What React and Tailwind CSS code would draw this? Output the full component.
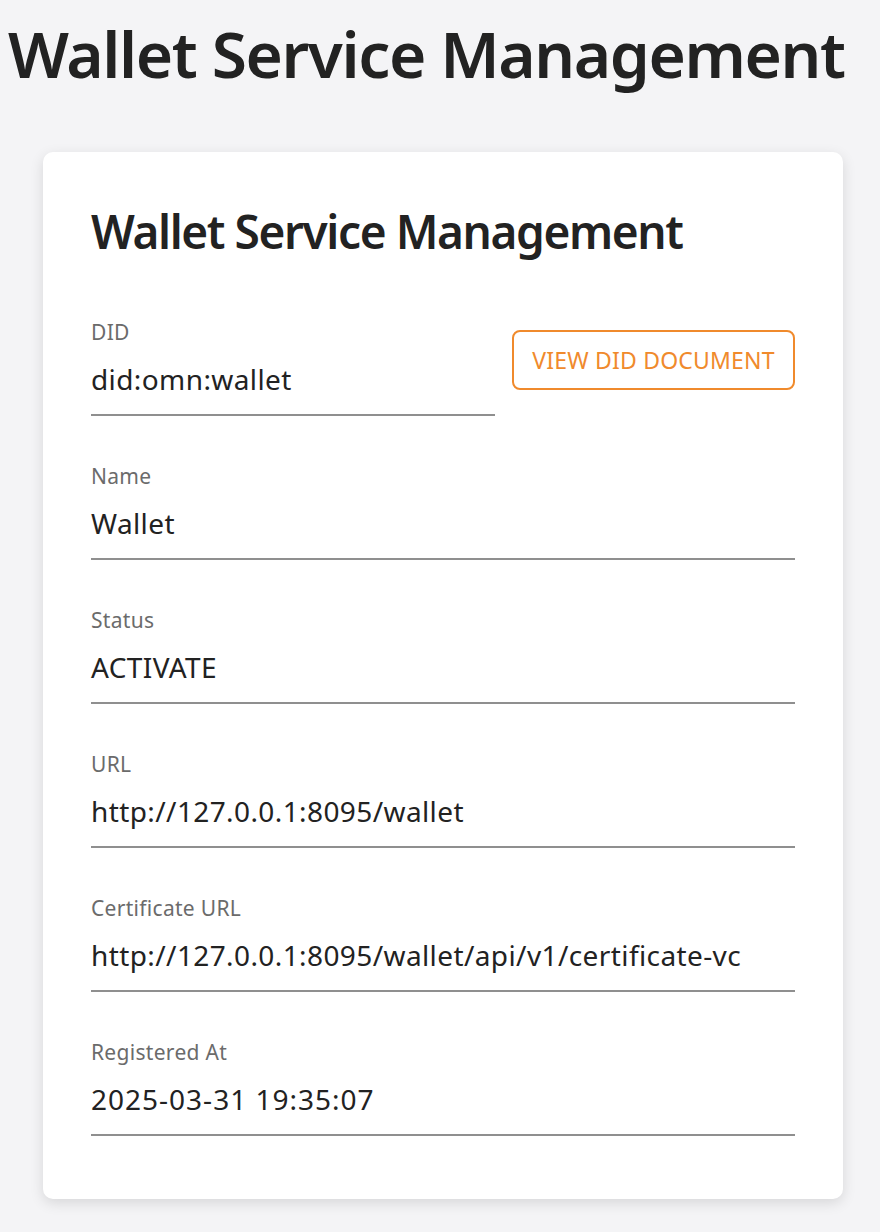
const fields = [
  { label: 'Name', value: 'Wallet' },
  { label: 'Status', value: 'ACTIVATE' },
  { label: 'URL', value: 'http://127.0.0.1:8095/wallet' },
  { label: 'Certificate URL', value: 'http://127.0.0.1:8095/wallet/api/v1/certificate-vc' },
  { label: 'Registered At', value: '2025-03-31 19:35:07', wide: true },
];

function Field({ label, value, wide, className = '' }) {
  return (
    <div className={`flex flex-col border-b-2 border-[#8f8f8f] ${className}`}>
      <span className="text-[21px] leading-[30px] tracking-[0.3px] text-[#6b6b6b]">{label}</span>
      <span
        className={`mt-[14px] pb-[17px] text-[28px] leading-[36px] text-[#222222] ${
          wide ? 'tracking-[1px]' : 'tracking-[0.4px]'
        }`}
      >
        {value}
      </span>
    </div>
  );
}

export default function App() {
  return (
    <div
      className="min-h-[1232px] bg-[#f4f4f6] pt-[10px]"
      style={{ fontFamily: '"Noto Sans", sans-serif' }}
    >
      <h1 className="ml-[8px] text-[64px] font-semibold leading-[88px] tracking-[-1.4px] text-[#222222]">
        Wallet Service Management
      </h1>
      <div className="ml-[43px] mt-[54px] w-[800px] rounded-[10px] bg-white px-[48px] pb-[63px] pt-[49px] shadow-[0_4px_14px_rgba(0,0,0,0.12)]">
        <h2 className="text-[46px] font-semibold leading-[60px] tracking-[-1.4px] text-[#222222]">
          Wallet Service Management
        </h2>
        <div className="mt-[56px] flex items-start gap-[17px]">
          <Field label="DID" value="did:omn:wallet" className="w-[404px]" />
          <button className="mt-[13px] h-[60px] w-[283px] rounded-[8px] border-2 border-[#f08a2c] text-[23px] tracking-[0.2px] text-[#f08a2c]">
            VIEW DID DOCUMENT
          </button>
        </div>
        {fields.map((f) => (
          <Field key={f.label} label={f.label} value={f.value} wide={f.wide} className="mt-[45px]" />
        ))}
      </div>
    </div>
  );
}
